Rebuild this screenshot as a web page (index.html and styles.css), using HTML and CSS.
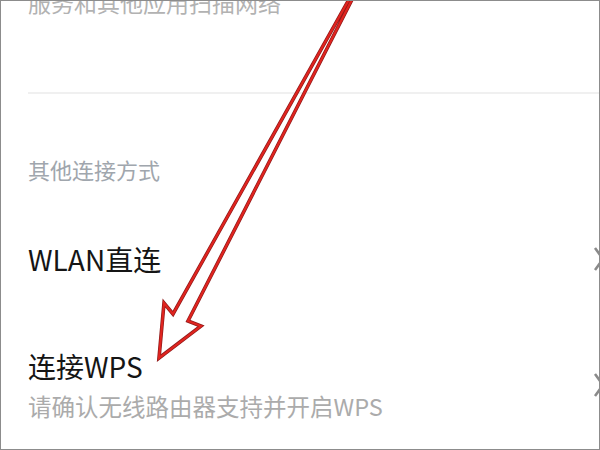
FILE: index.html
```html
<!DOCTYPE html>
<html>
<head>
    <meta charset="utf-8">
    <title>WLAN 设置</title>
    <link rel="stylesheet" href="styles.css">
</head>
<body>
    <div class="screen">
        <p class="hint top-hint">服务和其他应用扫描网络</p>
        <div class="divider"></div>

        <p class="section-title">其他连接方式</p>

        <div class="row row-direct">
            <div class="row-text">
                <span class="row-title">WLAN直连</span>
            </div>
            <svg class="chevron" width="12" height="26" viewBox="0 0 12 26">
                <polyline points="2,2 10,13 2,24"/>
            </svg>
        </div>

        <div class="row row-wps">
            <div class="row-text">
                <span class="row-title">连接WPS</span>
                <span class="row-sub">请确认无线路由器支持并开启WPS</span>
            </div>
            <svg class="chevron" width="12" height="26" viewBox="0 0 12 26">
                <polyline points="2,2 10,13 2,24"/>
            </svg>
        </div>

        <!-- pointer drawn over the list -->
        <svg class="pointer" width="600" height="450" viewBox="0 0 600 450">
            <polygon class="pointer-edge" points="361,-22 173,314 164,303 159,358 201,326 188,321 363,-22"/>
            <polygon class="pointer-line" points="361,-22 173,314 164,303 159,358 201,326 188,321 363,-22"/>
        </svg>
    </div>
</body>
</html>
```

FILE: styles.css
```css
body {
    margin: 0;
    background: #fff;
    font-family: "Noto Sans CJK SC", "Noto Sans", sans-serif;
}

.screen {
    position: relative;
    box-sizing: border-box;
    width: 600px;
    height: 450px;
    border: 1px solid #8c8c8c;
    background: #fff;
    overflow: hidden;
}

p {
    margin: 0;
}

.hint {
    color: #b2b2b2;
    font-size: 23px;
    line-height: 23px;
    padding-left: 27px;
}

.top-hint {
    margin-top: -10px;
}

.divider {
    height: 2px;
    background: #f0f0f0;
    margin: 78px 0 0 27px;
}

.section-title {
    color: #a0a6ad;
    font-size: 22px;
    line-height: 22px;
    padding-left: 27px;
    margin-top: 64px;
}

.row {
    display: flex;
    align-items: center;
    justify-content: space-between;
    padding-left: 27px;
}

.row-text {
    display: flex;
    flex-direction: column;
}

.row-title {
    color: #151515;
    font-size: 28px;
    line-height: 28px;
}

.row-sub {
    color: #ababab;
    font-size: 23.5px;
    line-height: 24px;
    margin-top: 14px;
}

.row-direct {
    margin-top: 65px;
}

.row-wps {
    margin-top: 79px;
}

.chevron {
    margin-right: -6px;
}

.chevron polyline {
    fill: none;
    stroke: #8a8a8a;
    stroke-width: 2.5;
}

.pointer {
    position: absolute;
    left: -1px;
    top: -1px;
}

.pointer polygon {
    fill: none;
    stroke-linejoin: miter;
}

.pointer-edge {
    stroke: #8e1a1a;
    stroke-width: 3.6;
}

.pointer-line {
    stroke: #e0241f;
    stroke-width: 2.2;
}
```
